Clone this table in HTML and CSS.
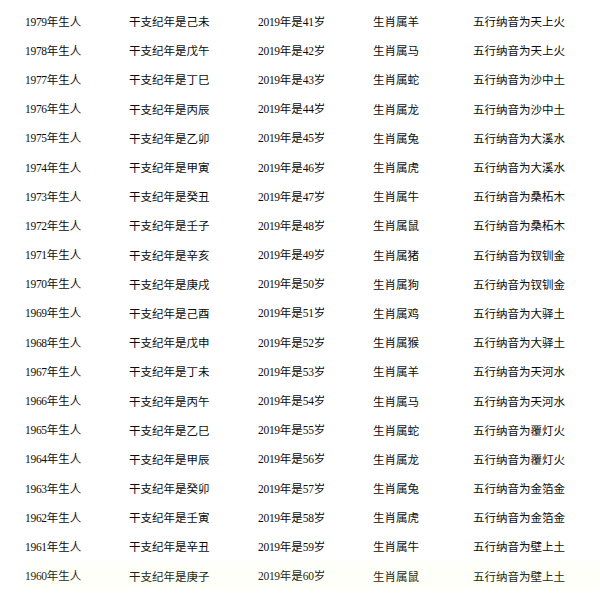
FILE: index.html
```html
<!DOCTYPE html>
<html lang="zh">
<head>
<meta charset="utf-8">
<link rel="stylesheet" href="styles.css">
</head>
<body>
<div class="table">
<div class="row"><div class="c"><span class="n">1979</span>年生人</div><div class="c">干支纪年是己未</div><div class="c"><span class="n">2019</span>年是<span class="n">41</span>岁</div><div class="c">生肖属羊</div><div class="c">五行纳音为天上火</div></div>
<div class="row"><div class="c"><span class="n">1978</span>年生人</div><div class="c">干支纪年是戊午</div><div class="c"><span class="n">2019</span>年是<span class="n">42</span>岁</div><div class="c">生肖属马</div><div class="c">五行纳音为天上火</div></div>
<div class="row"><div class="c"><span class="n">1977</span>年生人</div><div class="c">干支纪年是丁巳</div><div class="c"><span class="n">2019</span>年是<span class="n">43</span>岁</div><div class="c">生肖属蛇</div><div class="c">五行纳音为沙中土</div></div>
<div class="row"><div class="c"><span class="n">1976</span>年生人</div><div class="c">干支纪年是丙辰</div><div class="c"><span class="n">2019</span>年是<span class="n">44</span>岁</div><div class="c">生肖属龙</div><div class="c">五行纳音为沙中土</div></div>
<div class="row"><div class="c"><span class="n">1975</span>年生人</div><div class="c">干支纪年是乙卯</div><div class="c"><span class="n">2019</span>年是<span class="n">45</span>岁</div><div class="c">生肖属兔</div><div class="c">五行纳音为大溪水</div></div>
<div class="row"><div class="c"><span class="n">1974</span>年生人</div><div class="c">干支纪年是甲寅</div><div class="c"><span class="n">2019</span>年是<span class="n">46</span>岁</div><div class="c">生肖属虎</div><div class="c">五行纳音为大溪水</div></div>
<div class="row"><div class="c"><span class="n">1973</span>年生人</div><div class="c">干支纪年是癸丑</div><div class="c"><span class="n">2019</span>年是<span class="n">47</span>岁</div><div class="c">生肖属牛</div><div class="c">五行纳音为桑柘木</div></div>
<div class="row"><div class="c"><span class="n">1972</span>年生人</div><div class="c">干支纪年是壬子</div><div class="c"><span class="n">2019</span>年是<span class="n">48</span>岁</div><div class="c">生肖属鼠</div><div class="c">五行纳音为桑柘木</div></div>
<div class="row"><div class="c"><span class="n">1971</span>年生人</div><div class="c">干支纪年是辛亥</div><div class="c"><span class="n">2019</span>年是<span class="n">49</span>岁</div><div class="c">生肖属猪</div><div class="c">五行纳音为钗钏金</div></div>
<div class="row"><div class="c"><span class="n">1970</span>年生人</div><div class="c">干支纪年是庚戌</div><div class="c"><span class="n">2019</span>年是<span class="n">50</span>岁</div><div class="c">生肖属狗</div><div class="c">五行纳音为钗钏金</div></div>
<div class="row"><div class="c"><span class="n">1969</span>年生人</div><div class="c">干支纪年是己酉</div><div class="c"><span class="n">2019</span>年是<span class="n">51</span>岁</div><div class="c">生肖属鸡</div><div class="c">五行纳音为大驿土</div></div>
<div class="row"><div class="c"><span class="n">1968</span>年生人</div><div class="c">干支纪年是戊申</div><div class="c"><span class="n">2019</span>年是<span class="n">52</span>岁</div><div class="c">生肖属猴</div><div class="c">五行纳音为大驿土</div></div>
<div class="row"><div class="c"><span class="n">1967</span>年生人</div><div class="c">干支纪年是丁未</div><div class="c"><span class="n">2019</span>年是<span class="n">53</span>岁</div><div class="c">生肖属羊</div><div class="c">五行纳音为天河水</div></div>
<div class="row"><div class="c"><span class="n">1966</span>年生人</div><div class="c">干支纪年是丙午</div><div class="c"><span class="n">2019</span>年是<span class="n">54</span>岁</div><div class="c">生肖属马</div><div class="c">五行纳音为天河水</div></div>
<div class="row"><div class="c"><span class="n">1965</span>年生人</div><div class="c">干支纪年是乙巳</div><div class="c"><span class="n">2019</span>年是<span class="n">55</span>岁</div><div class="c">生肖属蛇</div><div class="c">五行纳音为覆灯火</div></div>
<div class="row"><div class="c"><span class="n">1964</span>年生人</div><div class="c">干支纪年是甲辰</div><div class="c"><span class="n">2019</span>年是<span class="n">56</span>岁</div><div class="c">生肖属龙</div><div class="c">五行纳音为覆灯火</div></div>
<div class="row"><div class="c"><span class="n">1963</span>年生人</div><div class="c">干支纪年是癸卯</div><div class="c"><span class="n">2019</span>年是<span class="n">57</span>岁</div><div class="c">生肖属兔</div><div class="c">五行纳音为金箔金</div></div>
<div class="row"><div class="c"><span class="n">1962</span>年生人</div><div class="c">干支纪年是壬寅</div><div class="c"><span class="n">2019</span>年是<span class="n">58</span>岁</div><div class="c">生肖属虎</div><div class="c">五行纳音为金箔金</div></div>
<div class="row"><div class="c"><span class="n">1961</span>年生人</div><div class="c">干支纪年是辛丑</div><div class="c"><span class="n">2019</span>年是<span class="n">59</span>岁</div><div class="c">生肖属牛</div><div class="c">五行纳音为壁上土</div></div>
<div class="row last"><div class="c"><span class="n">1960</span>年生人</div><div class="c">干支纪年是庚子</div><div class="c"><span class="n">2019</span>年是<span class="n">60</span>岁</div><div class="c">生肖属鼠</div><div class="c">五行纳音为壁上土</div></div>
</div>
</body>
</html>
```
FILE: styles.css
```css
html,body{margin:0;padding:0;background:#fff;}
body{width:600px;height:595px;overflow:hidden;}
.table{padding:6.5px 0 0 25px;display:flex;flex-direction:column;}
.row{display:grid;grid-template-columns:104px 129px 115px 100px 1fr;height:29.2px;align-items:center;
  font-family:"Noto Sans CJK SC","Liberation Sans",sans-serif;font-size:11.5px;color:#0c0c0c;line-height:14px;}
.row .n{font-family:"Liberation Serif",serif;font-size:11.5px;letter-spacing:-0.3px;}
.c{white-space:nowrap;}
.row.last{color:#1c2810;background:#fffffa;}
```
